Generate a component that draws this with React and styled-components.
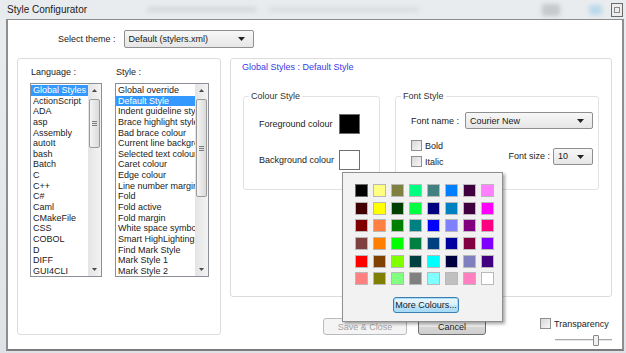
import React from "react";
import styled, { createGlobalStyle } from "styled-components";

const languages = [
  "Global Styles", "ActionScript", "ADA", "asp", "Assembly", "autoIt", "bash", "Batch", "C",
  "C++", "C#", "Caml", "CMakeFile", "CSS", "COBOL", "D", "DIFF", "GUI4CLI",
];

const styleNames = [
  "Global override", "Default Style", "Indent guideline style", "Brace highlight style",
  "Bad brace colour", "Current line background colour", "Selected text colour", "Caret colour",
  "Edge colour", "Line number margin", "Fold", "Fold active", "Fold margin",
  "White space symbol", "Smart HighLighting", "Find Mark Style", "Mark Style 1", "Mark Style 2",
];

// palette of the colour picker, row by row
const palette = [
  "#000000", "#ffff80", "#808040", "#00ff80", "#408080", "#0080ff", "#400040", "#ff80ff",
  "#400000", "#ffff00", "#004000", "#00ff40", "#000080", "#0080c0", "#400040", "#ff00ff",
  "#800000", "#ff8040", "#008000", "#008080", "#0000ff", "#8080ff", "#800080", "#ff0080",
  "#804040", "#ff8000", "#00ff00", "#008040", "#004080", "#0000a0", "#800040", "#8000ff",
  "#ff0000", "#804000", "#80ff00", "#004040", "#00ffff", "#000040", "#8080c0", "#400080",
  "#ff8080", "#808000", "#80ff80", "#808080", "#80ffff", "#c0c0c0", "#ff80c0", "#ffffff",
];

const GlobalStyle = createGlobalStyle`
  html, body { margin: 0; padding: 0; background: #e2e6ea; }
  body {
    font-family: "Liberation Sans", Arial, sans-serif;
    font-size: 9px;
    color: #222;
  }
`;

const Window = styled.div`
  position: relative;
  width: 626px;
  height: 353px;
  overflow: hidden;
  background: linear-gradient(180deg, #e9ecef 0%, #dfe3e7 100%);
`;

const TitleBar = styled.div`
  height: 19px;
  display: flex;
  align-items: center;
`;

const Title = styled.div`
  padding-left: 7px;
  font-size: 10px;
  color: #1c1c1c;
`;

const Haze = styled.div`
  flex: none;
  width: ${(p) => p.$w}px;
  height: ${(p) => p.$h}px;
  margin-left: ${(p) => p.$ml}px;
  background: ${(p) => p.$c};
  filter: blur(2px);
  border-radius: 2px;
`;

const CloseBox = styled.div`
  margin-left: auto;
  margin-right: 3px;
  width: 10px;
  height: 12px;
  border: 1px solid #6a6a6a;
  background: #ededed;
  display: flex;
  align-items: center;
  justify-content: center;

  &::after {
    content: "";
    width: 4px;
    height: 4px;
    border: 1px solid #8a8a8a;
  }
`;

const Frame = styled.div`
  margin-left: 6px;
  width: 614px;
  height: 329px;
  background: #fff;
  border-top: 1px solid #8d8d8d;
  border-left: 2px solid #8e8e8e;
  border-right: 2px solid #8e8e8e;
  border-bottom: 2px solid #7b7b7b;
`;

const ThemeRow = styled.div`
  margin-top: 10px;
  padding-left: 50px;
  display: flex;
  align-items: center;
  gap: 8px;
  height: 18px;
`;

const Combo = styled.div`
  box-sizing: border-box;
  width: ${(p) => p.$w}px;
  height: ${(p) => p.$h}px;
  display: flex;
  align-items: center;
  padding: 0 8px 0 4px;
  border: 1px solid #8e8f8f;
  border-radius: 2px;
  background: linear-gradient(180deg, #f7f7f7 0%, #e6e6e6 100%);
  color: #1a1a1a;
`;

const ComboText = styled.span`
  flex: 1;
`;

const Main = styled.div`
  margin-top: 10px;
  padding-left: 9px;
  display: flex;
  gap: 9px;
`;

const LeftPanel = styled.div`
  box-sizing: border-box;
  width: 204px;
  height: 277px;
  border: 1px solid #dcdcdc;
  border-radius: 3px;
  padding: 8px 0 0 12px;
  display: flex;
  gap: 13px;
`;

const ListColumn = styled.div`
  display: flex;
  flex-direction: column;
`;

const ListLabel = styled.div`
  height: 11px;
  line-height: 11px;
  padding-left: 1px;
  margin-bottom: 5px;
`;

const ListBox = styled.div`
  box-sizing: border-box;
  width: ${(p) => p.$w}px;
  height: 194px;
  border: 1px solid #8b9097;
  display: flex;
  background: #fff;
`;

const Items = styled.div`
  flex: 1;
  min-width: 0;
  overflow: hidden;
  padding-top: 1px;
`;

const Item = styled.div`
  height: 10.65px;
  line-height: 10.65px;
  padding-left: 2px;
  white-space: nowrap;
  overflow: hidden;
  background: ${(p) => (p.$selected ? "#3399ff" : "transparent")};
  color: ${(p) => (p.$selected ? "#fff" : "#222")};
`;

const ScrollTrack = styled.div`
  width: 13px;
  flex: none;
  display: flex;
  flex-direction: column;
  align-items: center;
  background: linear-gradient(90deg, #e4e4e4 0%, #f3f3f3 100%);
`;

const ArrowCell = styled.div`
  height: 13px;
  width: 100%;
  display: flex;
  align-items: center;
  justify-content: center;
`;

const Thumb = styled.div`
  box-sizing: border-box;
  width: 11px;
  height: ${(p) => p.$h}px;
  margin-top: 2px;
  border: 1px solid #9b9b9b;
  border-radius: 2px;
  background: linear-gradient(90deg, #f4f4f4 0%, #dadada 100%);
  display: flex;
  align-items: center;
  justify-content: center;
`;

const Fill = styled.div`
  flex: 1;
`;

const RightCol = styled.div`
  width: 382px;
  display: flex;
  flex-direction: column;
`;

const RightPanel = styled.div`
  box-sizing: border-box;
  height: 239px;
  border: 1px solid #dcdcdc;
  border-radius: 3px;
  padding: 3px 0 0 11px;
`;

const Heading = styled.div`
  height: 11px;
  line-height: 11px;
  color: #3a3ae6;
`;

const Groups = styled.div`
  margin-top: 18px;
  display: flex;
  gap: 15px;
  padding-left: 1px;
`;

const Group = styled.fieldset`
  box-sizing: border-box;
  margin: 0;
  width: ${(p) => p.$w}px;
  height: 99px;
  border: 1px solid #e2e2e2;
  border-radius: 3px;
  padding: 0 5px 0 15px;
`;

const Legend = styled.legend`
  padding: 0 2px;
  margin-left: -10px;
  line-height: 11px;
  color: #333;
`;

const ColourGrid = styled.div`
  margin-top: 12px;
  display: grid;
  grid-template-columns: 80px 21px;
  row-gap: 16px;
  align-items: center;
`;

const ColourWell = styled.div`
  box-sizing: border-box;
  width: 21px;
  height: 20px;
  border: 1px solid #6f6f6f;
  background: ${(p) => p.$c};
`;

const FontNameRow = styled.div`
  margin-top: 10px;
  display: flex;
  align-items: center;
`;

const FieldLabel = styled.div`
  width: ${(p) => p.$w}px;
  flex: none;
`;

const FontLower = styled.div`
  margin-top: 11px;
  display: flex;
`;

const Checks = styled.div`
  display: flex;
  flex-direction: column;
  gap: 5px;
`;

const CheckRow = styled.label`
  display: flex;
  align-items: center;
  gap: 3px;
  height: 11px;
`;

const Box = styled.span`
  box-sizing: border-box;
  width: 11px;
  height: 11px;
  border: 1px solid #8e8f8f;
  background: linear-gradient(135deg, #d8d8d8 0%, #f7f7f7 100%);
  flex: none;
`;

const SizeRow = styled.div`
  margin-left: auto;
  margin-top: 8px;
  display: flex;
  align-items: flex-start;
  gap: 3px;
  height: 17px;
  line-height: 17px;
`;

const BottomRow = styled.div`
  margin-top: 21px;
  padding-left: 93px;
  display: flex;
  align-items: flex-start;
`;

const Button = styled.div`
  box-sizing: border-box;
  width: ${(p) => p.$w}px;
  height: 17px;
  margin-right: ${(p) => p.$mr || 0}px;
  border: 1px solid ${(p) => (p.$disabled ? "#b8bcbf" : "#707070")};
  border-radius: 3px;
  background: ${(p) =>
    p.$disabled ? "#f4f4f4" : "linear-gradient(180deg, #f3f3f3 0%, #ebebeb 50%, #d6d6d6 51%, #cfcfcf 100%)"};
  color: ${(p) => (p.$disabled ? "#a3a3a3" : "#1a1a1a")};
  display: flex;
  align-items: center;
  justify-content: center;
`;

const Transparency = styled.div`
  margin-left: 54px;
  display: flex;
  flex-direction: column;
`;

const Slider = styled.div`
  position: relative;
  margin: 6px 0 0 15px;
  width: 57px;
  height: 10px;

  &::before {
    content: "";
    position: absolute;
    left: 0;
    right: 0;
    top: 4px;
    height: 1px;
    background: #a9a9a9;
    border-bottom: 1px solid #e6e6e6;
  }
`;

const SliderThumb = styled.div`
  position: absolute;
  left: 38px;
  top: 0;
  width: 4px;
  height: 9px;
  border: 1px solid #8a8a8a;
  border-radius: 1px;
  background: #f0f0f0;
`;

const Popup = styled.div`
  position: absolute;
  left: 342px;
  top: 172px;
  box-sizing: border-box;
  width: 161px;
  height: 150px;
  background: #f2f2f2;
  border: 1px solid #8f8f8f;
  box-shadow: 2px 2px 3px rgba(0, 0, 0, 0.35);
  padding: 11px 0 0 12px;
`;

const Palette = styled.div`
  display: grid;
  grid-template-columns: repeat(8, 13px);
  grid-auto-rows: 13px;
  column-gap: 5px;
  row-gap: 4.7px;
`;

const Swatch = styled.div`
  box-sizing: border-box;
  background: ${(p) => p.$c};
  border: 1px solid ${(p) => (p.$active ? "#6e6e6e" : "#b9b9b9")};
`;

const MoreButton = styled.div`
  box-sizing: border-box;
  margin: 12px 0 0 38px;
  width: 66px;
  height: 16px;
  border: 1px solid #3c7fb1;
  border-radius: 3px;
  box-shadow: inset 0 0 0 1px #a8dcf7;
  background: linear-gradient(180deg, #eaf6fd 0%, #d9f0fc 50%, #bee6fd 51%, #a7d9f5 100%);
  display: flex;
  align-items: center;
  justify-content: center;
  color: #1a1a1a;
`;

const DownArrow = () => (
  <svg width="7" height="4" viewBox="0 0 7 4">
    <polygon points="0,0 7,0 3.5,4" fill="#222" />
  </svg>
);

const SmallArrow = ({ up }) => (
  <svg width="5" height="3" viewBox="0 0 5 3">
    <polygon points={up ? "0,3 5,3 2.5,0" : "0,0 5,0 2.5,3"} fill="#4a4a4a" />
  </svg>
);

const Grip = () => (
  <svg width="5" height="5" viewBox="0 0 5 5">
    <path d="M0 0.5H5M0 2.5H5M0 4.5H5" stroke="#7a7a7a" strokeWidth="1" />
  </svg>
);

const List = ({ width, items, selected, thumb }) => (
  <ListBox $w={width}>
    <Items>
      {items.map((it) => (
        <Item key={it} $selected={it === selected}>
          {it}
        </Item>
      ))}
    </Items>
    <ScrollTrack>
      <ArrowCell>
        <SmallArrow up />
      </ArrowCell>
      <Thumb $h={thumb}>
        <Grip />
      </Thumb>
      <Fill />
      <ArrowCell>
        <SmallArrow />
      </ArrowCell>
    </ScrollTrack>
  </ListBox>
);

export default function App() {
  return (
    <>
      <GlobalStyle />
      <Window>
        <TitleBar>
          <Title>Style Configurator</Title>
          <Haze $w={110} $h={5} $ml={60} $c="rgba(120,120,120,0.16)" />
          <Haze $w={150} $h={5} $ml={12} $c="rgba(120,120,120,0.12)" />
          <Haze $w={18} $h={12} $ml={123} $c="rgba(110,110,110,0.28)" />
          <Haze $w={13} $h={10} $ml={29} $c="rgba(120,190,230,0.4)" />
          <CloseBox />
        </TitleBar>
        <Frame>
          <ThemeRow>
            <span>Select theme :</span>
            <Combo $w={130} $h={18}>
              <ComboText>Default (stylers.xml)</ComboText>
              <DownArrow />
            </Combo>
          </ThemeRow>
          <Main>
            <LeftPanel>
              <ListColumn>
                <ListLabel>Language :</ListLabel>
                <List width={72} items={languages} selected="Global Styles" thumb={49} />
              </ListColumn>
              <ListColumn>
                <ListLabel>Style :</ListLabel>
                <List width={94} items={styleNames} selected="Default Style" thumb={98} />
              </ListColumn>
            </LeftPanel>
            <RightCol>
              <RightPanel>
                <Heading>Global Styles : Default Style</Heading>
                <Groups>
                  <Group $w={137}>
                    <Legend>Colour Style</Legend>
                    <ColourGrid>
                      <span>Foreground colour</span>
                      <ColourWell $c="#000" />
                      <span>Background colour</span>
                      <ColourWell $c="#fff" />
                    </ColourGrid>
                  </Group>
                  <Group $w={204}>
                    <Legend>Font Style</Legend>
                    <FontNameRow>
                      <FieldLabel $w={54}>Font name :</FieldLabel>
                      <Combo $w={128} $h={17}>
                        <ComboText>Courier New</ComboText>
                        <DownArrow />
                      </Combo>
                    </FontNameRow>
                    <FontLower>
                      <Checks>
                        <CheckRow>
                          <Box />
                          Bold
                        </CheckRow>
                        <CheckRow>
                          <Box />
                          Italic
                        </CheckRow>
                        <CheckRow>
                          <Box />
                          Underline
                        </CheckRow>
                      </Checks>
                      <SizeRow>
                        <span>Font size :</span>
                        <Combo $w={40} $h={17}>
                          <ComboText>10</ComboText>
                          <DownArrow />
                        </Combo>
                      </SizeRow>
                    </FontLower>
                  </Group>
                </Groups>
              </RightPanel>
              <BottomRow>
                <Button $w={84} $mr={11} $disabled>
                  Save &amp; Close
                </Button>
                <Button $w={68}>Cancel</Button>
                <Transparency>
                  <CheckRow>
                    <Box />
                    Transparency
                  </CheckRow>
                  <Slider>
                    <SliderThumb />
                  </Slider>
                </Transparency>
              </BottomRow>
            </RightCol>
          </Main>
        </Frame>
        <Popup>
          <Palette>
            {palette.map((c, i) => (
              <Swatch key={i} $c={c} $active={i === 0} />
            ))}
          </Palette>
          <MoreButton>More Colours...</MoreButton>
        </Popup>
      </Window>
    </>
  );
}
